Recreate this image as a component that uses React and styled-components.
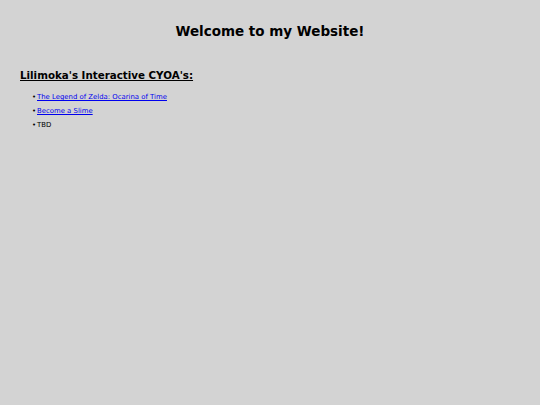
import React from "react";
import styled, { createGlobalStyle } from "styled-components";

const Global = createGlobalStyle`
  html, body { margin: 0; padding: 0; background: #d3d3d3; }
  body { font-family: "DejaVu Sans", Verdana, sans-serif; color: #000; }
`;

const Page = styled.div`
  padding: 23px 20px 0 20px;
`;

const Title = styled.h1`
  margin: 0;
  text-align: center;
  font-size: 13.5px;
  font-weight: bold;
  line-height: 17px;
`;

const Section = styled.section`
  margin-top: 28px;
`;

const Heading = styled.h2`
  margin: 0;
  font-size: 10.3px;
  font-weight: bold;
  text-decoration: underline;
  line-height: 14px;
`;

const List = styled.ul`
  margin: 8px 0 0 0;
  padding-left: 12px;
  list-style: none;
  font-size: 6.9px;
  line-height: 14px;
`;

const Item = styled.li`
  &::before {
    content: "•";
    display: inline-block;
    width: 5px;
  }
`;

const Link = styled.a`
  color: #0000ee;
  text-decoration: underline;
`;

export default function App() {
  return (
    <>
      <Global />
      <Page>
        <Title>Welcome to my Website!</Title>
        <Section>
          <Heading>Lilimoka's Interactive CYOA's:</Heading>
          <List>
            <Item><Link href="#">The Legend of Zelda: Ocarina of Time</Link></Item>
            <Item><Link href="#">Become a Slime</Link></Item>
            <Item>TBD</Item>
          </List>
        </Section>
      </Page>
    </>
  );
}
